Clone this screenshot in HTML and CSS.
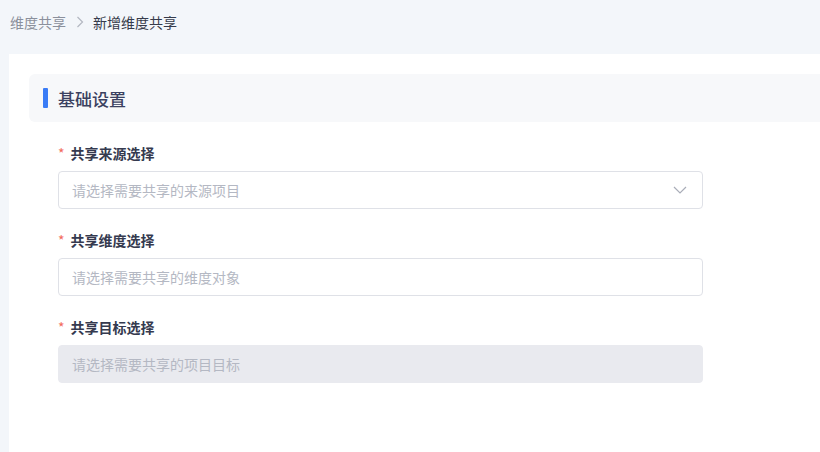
FILE: index.html
```html
<html lang="zh-CN">
<head>
    <meta charset="UTF-8">
    <meta name="viewport" content="width=device-width, initial-scale=1.0">
    <title>新增维度共享</title>
    <link rel="stylesheet" href="styles.css">
</head>
<body>
    <div class="breadcrumb">
        <span class="crumb">维度共享</span>
        <svg class="crumb-sep" width="8" height="12" viewBox="0 0 8 12"><path d="M1.5 1 L6.5 6 L1.5 11" fill="none" stroke="#b3b7c1" stroke-width="1.2"/></svg>
        <span class="crumb current">新增维度共享</span>
    </div>

    <div class="card">
        <div class="section-title">
            <span class="bar"></span>
            <h2>基础设置</h2>
        </div>

        <form class="share-form">
            <div class="field">
                <label><span class="required">*</span>共享来源选择</label>
                <div class="input select">
                    <span class="placeholder">请选择需要共享的来源项目</span>
                    <svg class="arrow" width="14" height="8" viewBox="0 0 14 8"><path d="M1 1 L7 7 L13 1" fill="none" stroke="#a9adb8" stroke-width="1.2"/></svg>
                </div>
            </div>

            <div class="field">
                <label><span class="required">*</span>共享维度选择</label>
                <div class="input">
                    <span class="placeholder">请选择需要共享的维度对象</span>
                </div>
            </div>

            <div class="field">
                <label><span class="required">*</span>共享目标选择</label>
                <div class="input disabled">
                    <span class="placeholder">请选择需要共享的项目目标</span>
                </div>
            </div>
        </form>
    </div>
</body>
</html>
```

FILE: styles.css
```css
body {
    margin: 0;
    height: 100vh;
    overflow: hidden;
    background-color: #f3f6fa;
    font-family: "Noto Sans CJK SC", "Noto Sans", sans-serif;
    display: flex;
    flex-direction: column;
}
.breadcrumb {
    display: flex;
    align-items: center;
    height: 44px;
    padding: 0 0 0 10px;
    font-size: 14px;
}
.crumb {
    color: #8b909c;
}
.crumb.current {
    color: #363b4b;
}
.crumb-sep {
    margin: 0 9px 0 10px;
}
.card {
    flex: 1;
    margin: 10px 0 0 9px;
    padding: 20px 0 0 20px;
    background-color: #ffffff;
    overflow: hidden;
}
.section-title {
    display: flex;
    align-items: center;
    height: 48px;
    margin-right: -10px;
    padding-left: 14px;
    background-color: #f7f8fa;
    border-radius: 6px;
}
.bar {
    width: 5px;
    height: 20px;
    background-color: #3a7cf6;
    border-radius: 1px;
}
.section-title h2 {
    margin: 0 0 0 10px;
    font-size: 17px;
    font-weight: 500;
    color: #3b4160;
}
.share-form {
    width: 645px;
    padding: 20px 0 0 29px;
}
.field {
    display: flex;
    flex-direction: column;
    margin-bottom: 20px;
}
.field label {
    height: 22px;
    line-height: 22px;
    margin-bottom: 7px;
    font-size: 14px;
    font-weight: 700;
    color: #353a4f;
}
.required {
    color: #f26b5c;
    font-weight: 400;
    margin-right: 6px;
}
.input {
    display: flex;
    align-items: center;
    justify-content: space-between;
    height: 38px;
    box-sizing: border-box;
    padding: 0 14px 0 13px;
    border: 1px solid #dfe1e7;
    border-radius: 4px;
    font-size: 14px;
}
.placeholder {
    color: #b4b8c3;
}
.arrow {
    margin-right: 1px;
}
.input.disabled {
    background-color: #e9eaef;
    border-color: #e9eaef;
}
```
